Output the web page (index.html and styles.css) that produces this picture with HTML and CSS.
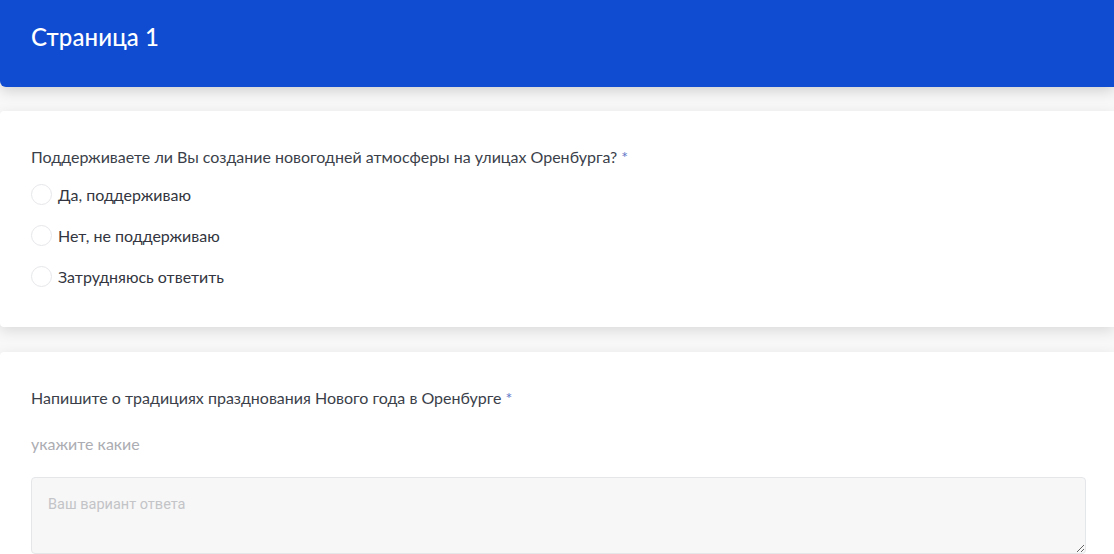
FILE: index.html
```html
<!DOCTYPE html>
<html lang="ru">
<head>
<meta charset="utf-8">
<title>Страница 1</title>
<link rel="stylesheet" href="styles.css">
</head>
<body>
<header class="page-header">
  <h1 class="page-title">Страница 1</h1>
</header>
<main class="form">
  <section class="card">
    <p class="question">Поддерживаете ли Вы создание новогодней атмосферы на улицах Оренбурга? <span class="req">*</span></p>
    <div class="options">
      <label class="option"><span class="radio"></span><span class="option-text">Да, поддерживаю</span></label>
      <label class="option"><span class="radio"></span><span class="option-text">Нет, не поддерживаю</span></label>
      <label class="option"><span class="radio"></span><span class="option-text">Затрудняюсь ответить</span></label>
    </div>
  </section>
  <section class="card card-text">
    <p class="question">Напишите о традициях празднования Нового года в Оренбурге <span class="req">*</span></p>
    <p class="hint">укажите какие</p>
    <textarea class="answer" placeholder="Ваш вариант ответа"></textarea>
  </section>
</main>
</body>
</html>
```

FILE: styles.css
```css
html, body {
  margin: 0;
  padding: 0;
}
body {
  background: #f8f8f8;
  font-family: Lato, "Noto Sans", sans-serif;
  overflow: hidden;
}
.page-header {
  height: 87px;
  background: #0f4cd2;
  border-bottom-left-radius: 6px;
  box-shadow: 0 4px 14px rgba(0, 0, 0, 0.16);
  display: flex;
  align-items: center;
  padding: 0 31px;
  box-sizing: border-box;
  position: relative;
  z-index: 2;
}
.page-title {
  margin: 0 0 14px 0;
  font-size: 24px;
  font-weight: 500;
  color: #ffffff;
  letter-spacing: 0.1px;
}
.form {
  display: flex;
  flex-direction: column;
  gap: 25px;
  padding-top: 24px;
}
.card {
  background: #ffffff;
  border-radius: 4px 0 0 4px;
  box-shadow: 0 4px 14px rgba(0, 0, 0, 0.12);
  padding: 36px 28px 41px 31px;
}
.question {
  margin: 0;
  font-size: 16px;
  line-height: 20px;
  color: #3b3f4a;
}
.req {
  color: #5f78c8;
}
.options {
  display: flex;
  flex-direction: column;
  gap: 21px;
  margin-top: 17px;
}
.option {
  display: flex;
  align-items: center;
  gap: 6px;
  height: 20px;
}
.radio {
  width: 19px;
  height: 19px;
  border: 1px solid #e6e7ea;
  border-radius: 50%;
  background: #fff;
}
.option-text {
  font-size: 16px;
  color: #333640;
}
.card-text {
  padding-top: 36px;
  padding-bottom: 40px;
}
.hint {
  margin: 26px 0 0 0;
  font-size: 16px;
  line-height: 20px;
  color: #acadb2;
}
.answer {
  display: block;
  margin-top: 23px;
  width: 100%;
  height: 77px;
  box-sizing: border-box;
  background: #f7f7f7;
  border: 1px solid #e4e6e8;
  border-radius: 4px;
  padding: 18px 16px;
  font-family: Roboto, "Liberation Sans", sans-serif;
  font-size: 14.5px;
  color: #333;
  resize: vertical;
}
.answer::placeholder {
  color: #c3c4c7;
}
```
